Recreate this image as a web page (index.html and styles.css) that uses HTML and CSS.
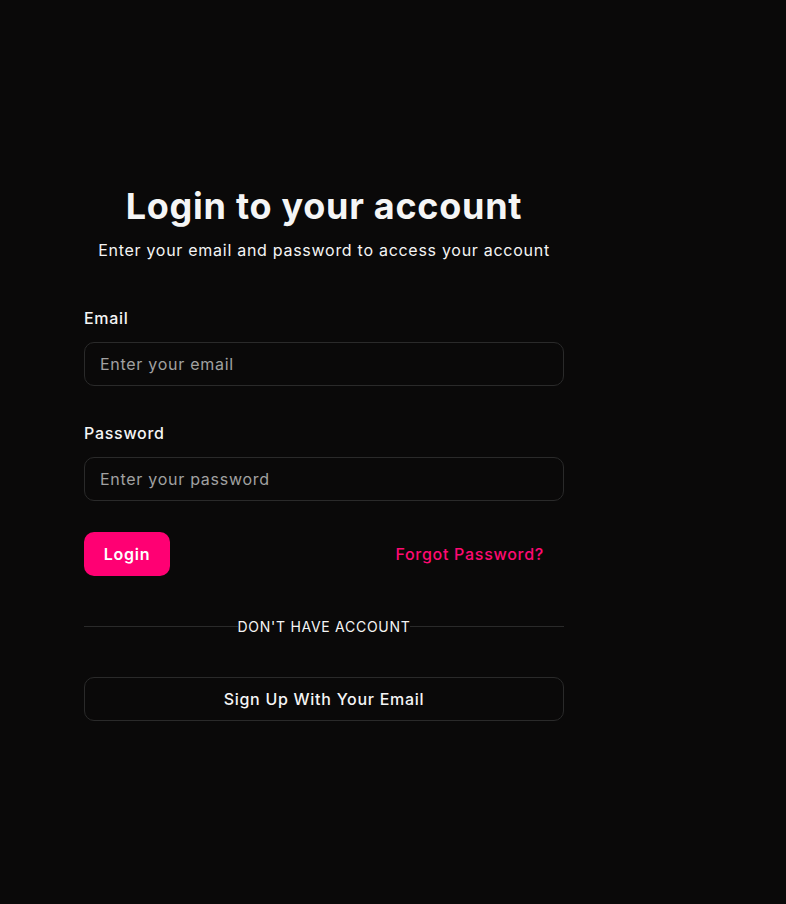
FILE: index.html
```html
<!DOCTYPE html>
<html lang="en">
<head>
<meta charset="utf-8">
<title>Login</title>
<link rel="stylesheet" href="styles.css">
</head>
<body>
<div class="page">
  <div class="panel">
    <form class="form">
      <h1 class="title">Login to your account</h1>
      <p class="subtitle">Enter your email and password to access your account</p>

      <div class="field field-email">
        <label class="label" for="email">Email</label>
        <input class="input" id="email" type="email" placeholder="Enter your email">
      </div>

      <div class="field field-password">
        <label class="label" for="password">Password</label>
        <input class="input" id="password" type="password" placeholder="Enter your password">
      </div>

      <div class="actions">
        <button class="btn-login" type="button">Login</button>
        <a class="forgot" href="#">Forgot Password?</a>
      </div>

      <div class="divider">
        <span class="divider-line"></span>
        <span class="divider-text">DON'T HAVE ACCOUNT</span>
        <span class="divider-line"></span>
      </div>

      <button class="btn-signup" type="button">Sign Up With Your Email</button>
    </form>
  </div>
</div>
</body>
</html>
```

FILE: styles.css
```css
* { box-sizing: border-box; }

html, body {
  margin: 0;
  padding: 0;
  background: #0a0909;
}

body {
  font-family: Inter, "Noto Sans", "Liberation Sans", sans-serif;
  color: #f5f5f5;
  letter-spacing: 0.72px;
}

.page {
  min-height: 904px;
  display: flex;
  align-items: center;
}

.panel {
  width: 648px;
  display: flex;
  justify-content: center;
}

.form {
  width: 480px;
  margin-top: 2px;
  display: flex;
  flex-direction: column;
}

.title {
  margin: 0;
  font-size: 36px;
  line-height: 40px;
  font-weight: 700;
  text-align: center;
  color: #f5f5f5;
}

.subtitle {
  margin: 12px 0 0;
  font-size: 16px;
  line-height: 24px;
  text-align: center;
  color: #f5f5f5;
}

.field {
  display: flex;
  flex-direction: column;
  gap: 12px;
}

.field-email { margin-top: 44px; }
.field-password { margin-top: 35px; }

.label {
  font-size: 16px;
  line-height: 24px;
  font-weight: 500;
  color: #f5f5f5;
}

.input {
  height: 44px;
  width: 100%;
  padding: 0 15px;
  border: 1px solid #2a2a2a;
  border-radius: 10px;
  background: #0a0909;
  color: #f5f5f5;
  font-family: inherit;
  font-size: 16px;
  letter-spacing: 0.72px;
  outline: none;
}

.input::placeholder {
  color: #a1a1a1;
}

.actions {
  margin-top: 31px;
  display: flex;
  justify-content: space-between;
  align-items: center;
}

.btn-login {
  height: 44px;
  width: 86px;
  border: none;
  border-radius: 10px;
  background: #ff0073;
  color: #ffffff;
  font-family: inherit;
  font-size: 16px;
  font-weight: 600;
  letter-spacing: 0.72px;
  padding: 0;
}

.forgot {
  height: 44px;
  display: flex;
  align-items: center;
  padding: 0 20px;
  color: #ff0a72;
  font-size: 16px;
  font-weight: 500;
  text-decoration: none;
}

.divider {
  margin-top: 41px;
  display: flex;
  align-items: center;
}

.divider-line {
  flex: 1;
  height: 1px;
  background: #2a2a2a;
}

.divider-text {
  font-size: 14px;
  line-height: 20px;
  color: #f5f5f5;
}

.btn-signup {
  margin-top: 40px;
  height: 44px;
  width: 100%;
  border: 1px solid #2a2a2a;
  border-radius: 10px;
  background: #0a0909;
  color: #f5f5f5;
  font-family: inherit;
  font-size: 16px;
  font-weight: 500;
  letter-spacing: 0.72px;
}
```
